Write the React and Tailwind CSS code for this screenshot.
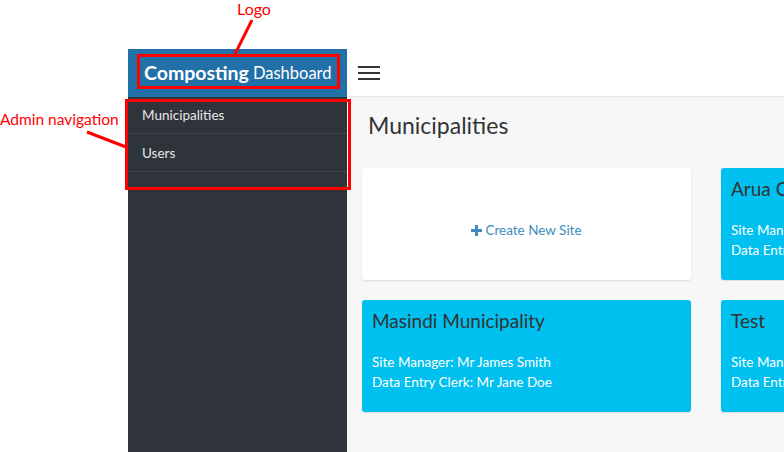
import React from "react";

const font = { fontFamily: "Lato, 'Open Sans', sans-serif" };

function Card({ title, manager, clerk }) {
  return (
    <div className="w-[329px] h-[112px] shrink-0 rounded-[3px] bg-[#00c0ef] px-[10px] pt-[8px] shadow-[0_1px_1px_rgba(0,0,0,0.1)]">
      <div className="text-[19px] leading-[26px] text-[#333]">{title}</div>
      <div className="mt-[18px] text-[13.5px] leading-[20px] text-white">Site Manager: {manager}</div>
      <div className="text-[13.5px] leading-[20px] text-white">Data Entry Clerk: {clerk}</div>
    </div>
  );
}

export default function App() {
  return (
    <div className="relative w-[784px] h-[452px] overflow-hidden bg-white" style={font}>
      <div className="flex h-full pl-[128px] pt-[49px]">
        <aside className="w-[219px] shrink-0 flex flex-col bg-[#2f343b]">
          <div className="h-[48px] bg-[#2270a8] flex items-center pl-[16px] text-white">
            <span className="text-[19.5px] font-bold">Composting</span>
            <span className="text-[16.5px] ml-[4px]">Dashboard</span>
          </div>
          <nav className="text-[13.5px] text-[#e8e8e8]">
            <div className="h-[37px] flex items-center pl-[14px] pt-[1px] border-b border-[#41454c]">Municipalities</div>
            <div className="h-[38px] flex items-center pl-[14px] pt-[1px] border-b border-[#41454c]">Users</div>
          </nav>
        </aside>
        <div className="flex-1 flex flex-col min-w-0">
          <header className="h-[48px] shrink-0 bg-white border-b border-[#e6e6e6] flex items-center pl-[11px]">
            <svg width="22" height="14" viewBox="0 0 22 14">
              <rect x="0" y="0" width="22" height="2" fill="#333" />
              <rect x="0" y="6" width="22" height="2" fill="#333" />
              <rect x="0" y="12" width="22" height="2" fill="#333" />
            </svg>
          </header>
          <main className="flex-1 bg-[#f7f7f7] pl-[15px] overflow-hidden">
            <h1 className="pl-[6px] pt-[13px] text-[23px] leading-[30px] text-[#333]">Municipalities</h1>
            <div className="mt-[28px] flex flex-col gap-[20px]">
              <div className="flex gap-[30px]">
                <div className="w-[329px] h-[112px] shrink-0 rounded-[3px] bg-white shadow-[0_1px_2px_rgba(0,0,0,0.12)] flex items-center justify-center pt-[13px] text-[13.5px] text-[#3c8dbc]">
                  <svg width="11" height="11" viewBox="0 0 11 11" className="mr-[3px]">
                    <rect x="4" y="0" width="3" height="11" fill="#3c8dbc" />
                    <rect x="0" y="4" width="11" height="3" fill="#3c8dbc" />
                  </svg>
                  Create New Site
                </div>
                <Card title="Arua Compost Site" manager="Mr James Smith" clerk="Mr Jane Doe" />
              </div>
              <div className="flex gap-[30px]">
                <Card title="Masindi Municipality" manager="Mr James Smith" clerk="Mr Jane Doe" />
                <Card title="Test" manager="Mr James Smith" clerk="Mr Jane Doe" />
              </div>
            </div>
          </main>
        </div>
      </div>

      {/* annotations */}
      <div className="absolute left-[237px] top-[-3px] text-[16px] text-[#ff0000]">Logo</div>
      <div className="absolute left-[0px] top-[108px] text-[15.5px] text-[#ff0000]">Admin navigation</div>
      <div className="absolute left-[137px] top-[54px] w-[203px] h-[35px] border-[3px] border-[#ff0000]" />
      <div className="absolute left-[125px] top-[99px] w-[226px] h-[91px] border-[3px] border-[#ff0000]" />
      <svg className="absolute left-0 top-0" width="784" height="452">
        <line x1="252" y1="20" x2="235" y2="54" stroke="#ff0000" strokeWidth="3" />
        <line x1="87" y1="132" x2="126" y2="147" stroke="#ff0000" strokeWidth="3" />
      </svg>
    </div>
  );
}
